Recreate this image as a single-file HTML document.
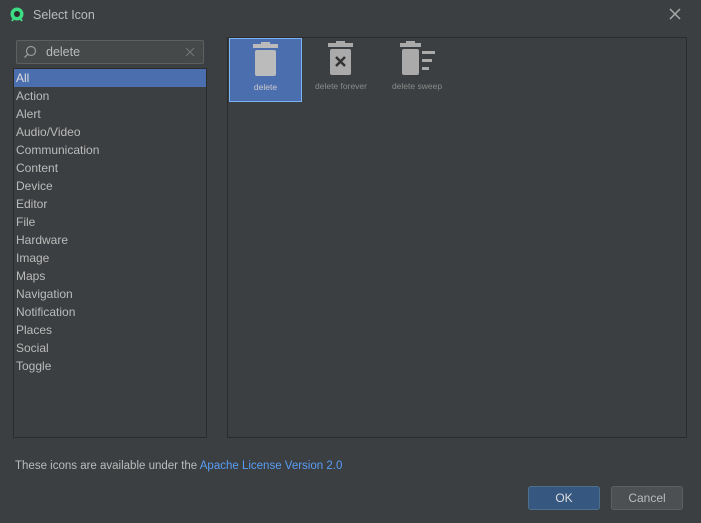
<!DOCTYPE html>
<html><head><style>
body{margin:0;width:701px;height:523px;background:#3c3f41;font-family:"Liberation Sans",sans-serif;color:#bbbbbb;position:relative;overflow:hidden}
.a{position:absolute}
.list div{height:18px;line-height:18px;font-size:12px;padding-left:2px;color:#bbb}
.tile{position:absolute;width:72px;height:62px;font-size:8.5px;text-align:center;color:#8a8a8a}
.tile span{position:absolute;left:0;right:0;top:43px}
</style></head><body>
<svg class="a" style="left:9px;top:7px" width="16" height="16" viewBox="0 0 16 16"><circle cx="8" cy="7" r="6.5" fill="#3ddc84"/><circle cx="8" cy="7" r="3" fill="#2b2b2b"/><path d="M3 14 L5 11 M13 14 L11 11" stroke="#3ddc84" stroke-width="2"/></svg>
<div class="a" style="left:33px;top:8px;font-size:12.5px;color:#bbb">Select Icon</div>
<svg class="a" style="left:669px;top:8px" width="12" height="12"><path d="M1 1L11 11M11 1L1 11" stroke="#aaa" stroke-width="1.5"/></svg>
<div class="a" style="left:16px;top:40px;width:186px;height:22px;border:1px solid #5e6060;border-radius:2px;background:#45494a"></div>
<svg class="a" style="left:23px;top:45px" width="14" height="14"><circle cx="8" cy="6" r="4.5" fill="none" stroke="#999" stroke-width="1.2"/><path d="M5 9L1.5 12.5" stroke="#999" stroke-width="1.3"/></svg>
<div class="a" style="left:46px;top:45px;font-size:12.5px;color:#bbb">delete</div>
<svg class="a" style="left:185px;top:47px" width="10" height="10"><path d="M1 1L9 9M9 1L1 9" stroke="#777" stroke-width="1"/></svg>
<div class="a list" style="left:13px;top:68px;width:192px;height:368px;border:1px solid #2b2b2b;background:#3c3f41">
<div style="background:#4b6eaf;color:#ddd">All</div><div>Action</div><div>Alert</div><div>Audio/Video</div><div>Communication</div><div>Content</div><div>Device</div><div>Editor</div><div>File</div><div>Hardware</div><div>Image</div><div>Maps</div><div>Navigation</div><div>Notification</div><div>Places</div><div>Social</div><div>Toggle</div></div>
<div class="a" style="left:227px;top:37px;width:458px;height:399px;border:1px solid #2b2b2b"></div>
<div class="tile" style="left:229px;top:38px;background:#4b6eaf;border:1px solid #7ab3f0;width:71px;height:62px;color:#ccc"><svg class="a" style="left:22px;top:3px" width="28" height="36"><rect x="1" y="2" width="25" height="4" fill="#bbb"/><rect x="9" y="0" width="9" height="3" fill="#bbb"/><rect x="3" y="8" width="21" height="26" rx="2" fill="#bbb"/></svg><span>delete</span></div>
<div class="tile" style="left:305px;top:38px"><svg class="a" style="left:22px;top:3px" width="28" height="36"><rect x="1" y="2" width="25" height="4" fill="#aaa"/><rect x="9" y="0" width="9" height="3" fill="#aaa"/><rect x="3" y="8" width="21" height="26" rx="2" fill="#aaa"/><path d="M9 16L18 25M18 16L9 25" stroke="#333" stroke-width="2.5"/></svg><span>delete forever</span></div>
<div class="tile" style="left:381px;top:38px"><svg class="a" style="left:18px;top:3px" width="40" height="36"><rect x="1" y="2" width="21" height="4" fill="#aaa"/><rect x="7" y="0" width="9" height="3" fill="#aaa"/><rect x="3" y="8" width="17" height="26" rx="2" fill="#aaa"/><rect x="23" y="10" width="13" height="3" fill="#aaa"/><rect x="23" y="18" width="10" height="3" fill="#aaa"/><rect x="23" y="26" width="7" height="3" fill="#aaa"/></svg><span>delete sweep</span></div>
<div class="a" style="left:15px;top:460px;font-size:11.5px;color:#bbb">These icons are available under the <span style="color:#589df6">Apache License Version 2.0</span></div>
<div class="a" style="left:528px;top:486px;width:70px;height:22px;border:1px solid #4c708c;border-radius:3px;background:#365880;color:#ddd;font-size:12px;text-align:center;line-height:22px">OK</div>
<div class="a" style="left:611px;top:486px;width:70px;height:22px;border:1px solid #5e6060;border-radius:3px;background:#4c5052;color:#bbb;font-size:12px;text-align:center;line-height:22px">Cancel</div>
</body></html>
